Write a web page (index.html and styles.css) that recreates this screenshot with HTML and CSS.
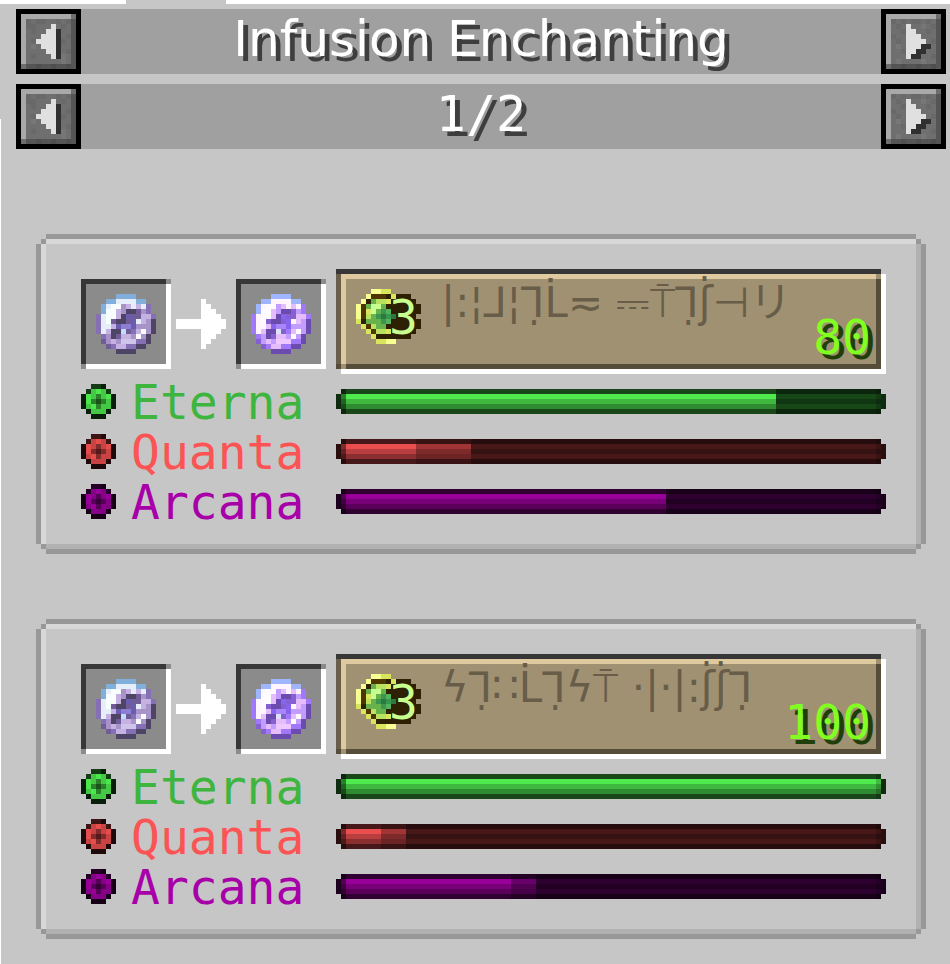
FILE: index.html
```html
<!DOCTYPE html>
<html lang="en">
<head>
  <meta charset="utf-8">
  <title>Infusion Enchanting</title>
  <link rel="stylesheet" href="styles.css">
</head>
<body>
  <header>
    <div class="bar-row">
      <button class="arrow-button" aria-label="Previous category"><svg data-sprite="left"></svg></button>
      <h1>Infusion Enchanting</h1>
      <button class="arrow-button" aria-label="Next category"><svg data-sprite="right"></svg></button>
    </div>
    <div class="bar-row">
      <button class="arrow-button" aria-label="Previous page"><svg data-sprite="left"></svg></button>
      <p class="page-number">1/2</p>
      <button class="arrow-button" aria-label="Next page"><svg data-sprite="right"></svg></button>
    </div>
  </header>

  <main>
    <section class="recipe">
      <div class="top">
        <div class="items">
          <div class="slot"><svg data-sprite="pearl"></svg></div>
          <svg class="arrow" data-sprite="arrow"></svg>
          <div class="slot"><svg data-sprite="infused"></svg></div>
        </div>
        <div class="enchant">
          <div class="level"><svg data-sprite="orb"></svg><span>3</span></div>
          <div class="enchant-text">
            <p class="runes">|:¦⅃¦⅂̣L̇≂ ⎓⍑⅂̣ʃ̇⊣リ</p>
            <p class="cost">80</p>
          </div>
        </div>
      </div>
      <div class="stat eterna">
        <div class="label"><svg data-sprite="gem" data-color="eterna"></svg><span>Eterna</span></div>
        <div class="meter" role="meter" aria-label="Eterna" aria-valuenow="80">
          <div class="fill" style="width: 80%"></div>
        </div>
      </div>
      <div class="stat quanta">
        <div class="label"><svg data-sprite="gem" data-color="quanta"></svg><span>Quanta</span></div>
        <div class="meter" role="meter" aria-label="Quanta" aria-valuenow="15">
          <div class="fill range" style="width: 24.5%"></div>
          <div class="fill" style="width: 14.5%"></div>
        </div>
      </div>
      <div class="stat arcana">
        <div class="label"><svg data-sprite="gem" data-color="arcana"></svg><span>Arcana</span></div>
        <div class="meter" role="meter" aria-label="Arcana" aria-valuenow="60">
          <div class="fill" style="width: 60%"></div>
        </div>
      </div>
    </section>

    <section class="recipe">
      <div class="top">
        <div class="items">
          <div class="slot"><svg data-sprite="pearl"></svg></div>
          <svg class="arrow" data-sprite="arrow"></svg>
          <div class="slot"><svg data-sprite="infused"></svg></div>
        </div>
        <div class="enchant">
          <div class="level"><svg data-sprite="orb"></svg><span>3</span></div>
          <div class="enchant-text">
            <p class="runes">ϟ⅂̣∷L̇⅂̣ϟ⍑ ·|·|:ʃ̇ʃ̇⅂̣</p>
            <p class="cost">100</p>
          </div>
        </div>
      </div>
      <div class="stat eterna">
        <div class="label"><svg data-sprite="gem" data-color="eterna"></svg><span>Eterna</span></div>
        <div class="meter" role="meter" aria-label="Eterna" aria-valuenow="100">
          <div class="fill" style="width: 100%"></div>
        </div>
      </div>
      <div class="stat quanta">
        <div class="label"><svg data-sprite="gem" data-color="quanta"></svg><span>Quanta</span></div>
        <div class="meter" role="meter" aria-label="Quanta" aria-valuenow="8">
          <div class="fill range" style="width: 12.7%"></div>
          <div class="fill" style="width: 8.2%"></div>
        </div>
      </div>
      <div class="stat arcana">
        <div class="label"><svg data-sprite="gem" data-color="arcana"></svg><span>Arcana</span></div>
        <div class="meter" role="meter" aria-label="Arcana" aria-valuenow="32">
          <div class="fill range" style="width: 36.4%"></div>
          <div class="fill" style="width: 31.8%"></div>
        </div>
      </div>
    </section>
  </main>

  <script src="sprites.js"></script>
</body>
</html>
```
FILE: styles.css
```css
* {
  box-sizing: border-box;
}
body {
  margin: 0;
  padding: 9px 4px 25px 16px;
  min-height: 100vh;
  font-family: "DejaVu Sans Mono", monospace;
  font-size: 48px;
  line-height: 37px;
  /* window edge: strip along the top with the open tab, thin line on the left */
  background:
    linear-gradient(#fff, #fff) 0 0 / 126px 4px no-repeat,
    linear-gradient(#c6c6c6, #c6c6c6) 126px 0 / 100px 4px no-repeat,
    linear-gradient(#fff, #fff) 0 0 / 100% 4px no-repeat,
    linear-gradient(#fff, #fff) 0 119px / 1px 100% no-repeat,
    #c6c6c6;
}
h1, p {
  margin: 0;
  font-weight: normal;
}
svg {
  display: block;
  flex: none;
}

/* header */
header {
  display: flex;
  flex-direction: column;
  gap: 10px;
}
.bar-row {
  display: flex;
  height: 65px;
  background: #a0a0a0;
  color: #fff;
  text-align: center;
  text-shadow: 5px 5px #3e3e3e;
}
h1, .page-number {
  flex: 1;
  padding-top: 12px;
  font-size: 50px;
}
h1 {
  font-family: "DejaVu Sans", sans-serif;
}
.arrow-button {
  width: 65px;
  height: 65px;
  padding: 0;
  border: 5px solid #000;
  border-radius: 0;
  background: #6f6f6f;
}

/* recipe panels */
main {
  display: flex;
  flex-direction: column;
  gap: 65px;
  margin: 85px 20px 0;
}
.recipe {
  display: flex;
  flex-direction: column;
  gap: 15px;
  padding: 30px 35px 30px 40px;
  border: 5px solid #989898;
  background:
    linear-gradient(#989898, #989898) 0 0 / 5px 5px no-repeat,
    linear-gradient(#989898, #989898) 100% 0 / 5px 5px no-repeat,
    linear-gradient(#989898, #989898) 0 100% / 5px 5px no-repeat,
    linear-gradient(#989898, #989898) 100% 100% / 5px 5px no-repeat,
    linear-gradient(#d8d8d8, #d8d8d8) 0 0 / 100% 5px no-repeat,
    linear-gradient(#d8d8d8, #d8d8d8) 0 0 / 5px 100% no-repeat,
    linear-gradient(#b1b1b1, #b1b1b1) 0 100% / 100% 5px no-repeat,
    linear-gradient(#b1b1b1, #b1b1b1) 100% 0 / 5px 100% no-repeat;
  clip-path: polygon(
    10px 0, calc(100% - 10px) 0, calc(100% - 10px) 5px, calc(100% - 5px) 5px,
    calc(100% - 5px) 10px, 100% 10px, 100% calc(100% - 10px), calc(100% - 5px) calc(100% - 10px),
    calc(100% - 5px) calc(100% - 5px), calc(100% - 10px) calc(100% - 5px), calc(100% - 10px) 100%, 10px 100%,
    10px calc(100% - 5px), 5px calc(100% - 5px), 5px calc(100% - 10px), 0 calc(100% - 10px),
    0 10px, 5px 10px, 5px 5px, 10px 5px);
}
.top {
  display: flex;
  height: 105px;
  margin-bottom: -5px;
}
.items {
  display: flex;
  align-items: center;
  width: 255px;
  height: 90px;
  margin-top: 10px;
}
.slot {
  display: flex;
  align-items: center;
  justify-content: center;
  width: 90px;
  height: 90px;
  background:
    linear-gradient(#8b8b8b, #8b8b8b) 100% 0 / 5px 5px no-repeat,
    linear-gradient(#8b8b8b, #8b8b8b) 0 100% / 5px 5px no-repeat,
    linear-gradient(#373737, #373737) 0 0 / 100% 5px no-repeat,
    linear-gradient(#373737, #373737) 0 0 / 5px 100% no-repeat,
    linear-gradient(#fff, #fff) 0 100% / 100% 5px no-repeat,
    linear-gradient(#fff, #fff) 100% 0 / 5px 100% no-repeat,
    #8b8b8b;
}
.arrow {
  margin: 0 10px 0 5px;
}

/* enchanting table entry */
.enchant {
  flex: 1;
  display: flex;
  gap: 20px;
  padding: 15px 15px 0 20px;
  background:
    linear-gradient(#c6c6c6, #c6c6c6) 100% 0 / 5px 5px no-repeat,
    linear-gradient(#c6c6c6, #c6c6c6) 0 100% / 5px 5px no-repeat,
    linear-gradient(#fff, #fff) 0 100% / 100% 5px no-repeat,
    linear-gradient(#fff, #fff) 100% 0 / 5px 100% no-repeat,
    linear-gradient(#373737, #373737) 0 0 / 100% 5px no-repeat,
    linear-gradient(#a09172, #a09172) calc(100% - 5px) 5px / 5px 5px no-repeat,
    linear-gradient(#a09172, #a09172) 5px calc(100% - 5px) / 5px 5px no-repeat,
    linear-gradient(#564c3a, #564c3a) 0 calc(100% - 5px) / 100% 5px no-repeat,
    linear-gradient(#564c3a, #564c3a) calc(100% - 5px) 0 / 5px 100% no-repeat,
    linear-gradient(#6a5f4b, #6a5f4b) 0 0 / 5px 100% no-repeat,
    linear-gradient(#dfca9f, #dfca9f) 0 5px / 100% 5px no-repeat,
    linear-gradient(#dfca9f, #dfca9f) 5px 0 / 5px 100% no-repeat,
    #a09172;
}
.level {
  position: relative;
  padding-top: 5px;
}
.level span {
  position: absolute;
  right: 3px;
  top: 15px;
  color: #c8ff8f;
}
.enchant-text {
  flex: 1;
}
.runes {
  height: 35px;
  font-family: "DejaVu Sans", "Noto Sans CJK JP", sans-serif;
  font-size: 42px;
  white-space: nowrap;
  color: #685d48;
}
.cost {
  text-align: right;
  color: #80ff20;
  text-shadow: 5px 5px #203f08;
}

/* stats */
.stat {
  display: flex;
  align-items: center;
  height: 35px;
}
.label {
  display: flex;
  gap: 15px;
  width: 255px;
  height: 35px;
}
.meter {
  position: relative;
  flex: 1;
  height: 25px;
  clip-path: polygon(
    5px 0, calc(100% - 5px) 0, calc(100% - 5px) 5px, 100% 5px,
    100% 20px, calc(100% - 5px) 20px, calc(100% - 5px) 100%, 5px 100%,
    5px 20px, 0 20px, 0 5px, 5px 5px);
  background: linear-gradient(var(--edge) 5px, var(--empty) 5px 10px, var(--core) 10px 15px, var(--empty) 15px 20px, var(--edge) 20px);
}
.fill {
  position: absolute;
  left: 0;
  top: 0;
  height: 25px;
  background: linear-gradient(var(--rim) 5px, var(--light) 5px 10px, var(--mid) 10px 15px, var(--dark) 15px 20px, var(--rim) 20px);
}
.range {
  opacity: 0.55;
}
/* shaded end caps */
.meter::after {
  content: "";
  position: absolute;
  inset: 0;
  background:
    linear-gradient(var(--cap), var(--cap)) 0 0 / 5px 100% no-repeat,
    linear-gradient(var(--cap), var(--cap)) 100% 0 / 5px 100% no-repeat,
    linear-gradient(#0007, #0007) 5px 0 / 5px 100% no-repeat,
    linear-gradient(#0003, #0003) calc(100% - 5px) 0 / 5px 100% no-repeat;
}
.eterna {
  color: #3eb53e;
  --cap: #0f2c10;
  --edge: #0c260d;
  --empty: #164817;
  --core: #103611;
  --rim: #194719;
  --light: #4eea4e;
  --mid: #3eb83f;
  --dark: #2e8b2f;
}
.quanta {
  color: #fc5454;
  --cap: #2a0e0e;
  --edge: #260c0d;
  --empty: #481718;
  --core: #361213;
  --rim: #471819;
  --light: #ea4e4e;
  --mid: #b83e3f;
  --dark: #8b2e2f;
}
.arcana {
  color: #a800a8;
  --cap: #1b001d;
  --edge: #170018;
  --empty: #2e002f;
  --core: #220024;
  --rim: #2f0030;
  --light: #980099;
  --mid: #780079;
  --dark: #5a005b;
}
```
FILE: sprites.js
```js
// Pixel art, one character per pixel. A dot is transparent.
const PIXEL = 5;

const pearlRows = [
  '....AAAA....',
  '..AABBBBAA..',
  '.ABWWLCBCBP.',
  '.AWWCLDDQLP.',
  'PBWWCDIQQCCP',
  'PBWQDDQIBCLD',
  'PBBCIJJILLLD',
  'PBCDDKQPCWLD',
  '.PLDQCCLWLD.',
  '.QLCLEEEPPD.',
  '..QPCCPPDD..',
  '....DDDD....'
];

const sprites = {
  pearl: {
    rows: pearlRows,
    colors: { A: '#81afdb', B: '#e6eef9', W: '#f8fdfe', P: '#8670b5', Q: '#705c97', D: '#4d4466', L: '#a793c8', C: '#c5b1e2', E: '#cfc5ea', I: '#6a5cb0', J: '#8d7dd5', K: '#c0dcf8' }
  },
  infused: {
    rows: pearlRows,
    colors: { A: '#a0b5ff', B: '#fff5ff', W: '#fffcff', P: '#a178fa', Q: '#8460d0', D: '#6b4bae', L: '#c39cff', C: '#e5bdfb', E: '#efc8ff', I: '#8764ef', J: '#a985fc', K: '#dfe2fa' }
  },
  arrow: {
    rows: [
      '.....W....',
      '.....WW...',
      '.....WWW..',
      '.....WWWW.',
      'WWWWWWWWWW',
      'WWWWWWWWWW',
      '.....WWWW.',
      '.....WWW..',
      '.....WW...',
      '.....W....'
    ],
    colors: { W: '#fff' }
  },
  left: {
    rows: [
      'LLLLLLLLLLM',
      'LaMaaMMaMaD',
      'LaaMMMWMaMD',
      'LMaMMWWSMMD',
      'LMMMWWWSMaD',
      'LMaWWWWSaMD',
      'LMbMWWWSMMD',
      'LMMMMWWSMaD',
      'LMaMMMWSbMD',
      'LMMMMMMMbMD',
      'MDDdDDdDDdD'
    ],
    colors: { L: '#a9a9a9', M: '#6f6f6f', a: '#696969', b: '#777', D: '#555', d: '#4f4f4f', W: '#e0e0e0', S: '#303030' }
  },
  right: {
    rows: [
      'LLLLLLLLLLM',
      'LaMaMaaMaMD',
      'LMaMWMMbMaD',
      'LMMaWWMMaMD',
      'LaMMWWWMMMD',
      'LMaMWWWWMaD',
      'LMbMWWWSSMD',
      'LMMaWWSSMMD',
      'LMMMWSSMMaD',
      'LMbMMMMbMMD',
      'MDDdDDdDDdD'
    ],
    colors: { L: '#a9a9a9', M: '#6f6f6f', a: '#696969', b: '#777', D: '#555', d: '#4f4f4f', W: '#e0e0e0', S: '#303030' }
  },
  orb: {
    rows: [
      '...YYyy......',
      '..Ybbbkykkk..',
      '.Ykgllykkkkk.',
      'Ybghhgkkkkkkk',
      'Ybyhgmekkkkkk',
      'Yblgmnmnkkkk.',
      'ykgggmekkkkkk',
      '.yblggkkkkkkk',
      '..ybllykkkkk.',
      '...ykkkkkkk..',
      '....yyYY.....'
    ],
    colors: { Y: '#f6ff90', y: '#d9e55a', b: '#4f3600', k: '#2e2003', g: '#67b24b', l: '#b8e25f', h: '#c5ff90', m: '#3b9650', e: '#54b25e', n: '#2a7a40' }
  },
  gem: {
    rows: [
      '..rrk..',
      '.rmlmr.',
      'klmdmlk',
      'kldcdmk',
      'kmldmmk',
      '.kmmmk.',
      '..kkk..'
    ]
  }
};

const gemColors = {
  eterna: { r: '#153d15', k: '#0a1f0b', m: '#43c943', l: '#4de64d', d: '#2a832b', c: '#1a541b' },
  quanta: { r: '#3d1515', k: '#1f0a0b', m: '#c94343', l: '#e64d4d', d: '#832a2b', c: '#541a1b' },
  arcana: { r: '#270028', k: '#150016', m: '#850086', l: '#980099', d: '#570058', c: '#370038' }
};

document.querySelectorAll('svg[data-sprite]').forEach(svg => {
  const sprite = sprites[svg.dataset.sprite];
  const colors = sprite.colors || gemColors[svg.dataset.color];
  const width = sprite.rows[0].length;
  const height = sprite.rows.length;

  svg.setAttribute('width', width * PIXEL);
  svg.setAttribute('height', height * PIXEL);
  svg.setAttribute('viewBox', `0 0 ${width} ${height}`);
  svg.setAttribute('shape-rendering', 'crispEdges');
  svg.setAttribute('aria-hidden', 'true');

  let rects = '';
  sprite.rows.forEach((row, y) => {
    [...row].forEach((key, x) => {
      if (key !== '.') {
        rects += `<rect x="${x}" y="${y}" width="1" height="1" fill="${colors[key]}"/>`;
      }
    });
  });
  svg.innerHTML = rects;
});
```
